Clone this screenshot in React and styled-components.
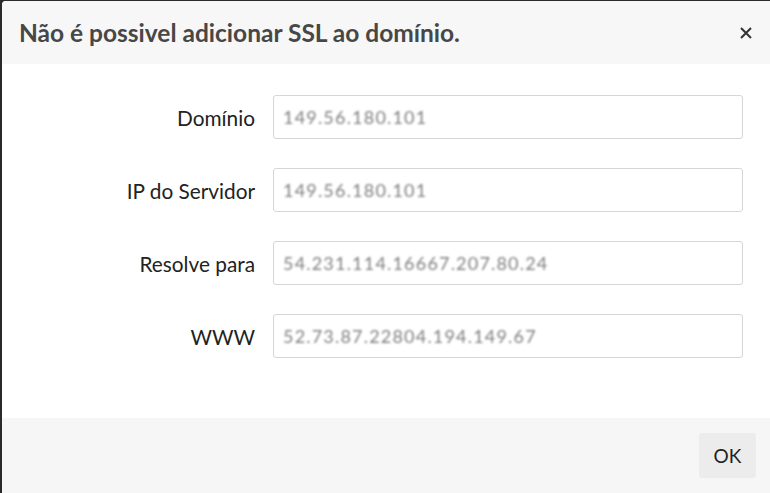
import React from "react";
import styled, { createGlobalStyle } from "styled-components";

const Global = createGlobalStyle`
  html, body { margin: 0; padding: 0; background: #2a2a2a; }
  body { font-family: Lato, "Open Sans", sans-serif; overflow: hidden; }
`;

const Dialog = styled.div`
  margin: 1px 0 0 2px;
  width: 768px;
  height: 492px;
  background: #fff;
  border-top-left-radius: 4px;
  display: flex;
  flex-direction: column;
  overflow: hidden;
`;

const Header = styled.div`
  height: 63px;
  flex: none;
  background: #f7f7f7;
  display: flex;
  align-items: center;
  justify-content: space-between;
  padding: 0 17px 0 17px;
  box-sizing: border-box;
`;

const Title = styled.h1`
  margin: 0;
  font-size: 24.5px;
  font-weight: 700;
  color: #474747;
  letter-spacing: 0;
`;

const Close = styled.button`
  border: 0;
  background: none;
  padding: 0;
  width: 14px;
  height: 14px;
  display: flex;
  align-items: center;
  justify-content: center;
  cursor: pointer;
`;

const Body = styled.div`
  flex: 1;
  padding: 31px 27px 0 0;
  display: flex;
  flex-direction: column;
  gap: 29px;
`;

const Row = styled.div`
  display: grid;
  grid-template-columns: 253px 1fr;
  column-gap: 18px;
  align-items: center;
`;

const Label = styled.label`
  text-align: right;
  font-size: 20.8px;
  color: #222;
`;

const Field = styled.div`
  height: 44px;
  box-sizing: border-box;
  border: 1px solid #d6d6d6;
  border-radius: 3px;
  display: flex;
  align-items: center;
  padding: 0 9px;
`;

const Value = styled.span`
  font-size: 18px;
  letter-spacing: 1.2px;
  color: #808080;
  filter: blur(1.1px);
`;

const Footer = styled.div`
  height: 75px;
  flex: none;
  background: #f6f6f6;
  display: flex;
  justify-content: flex-end;
  align-items: flex-start;
  padding: 15px 14px 0 0;
  box-sizing: border-box;
`;

const OkButton = styled.button`
  width: 57px;
  height: 45px;
  border: 0;
  border-radius: 3px;
  background: #ececec;
  font-family: inherit;
  font-size: 19px;
  color: #222;
  cursor: pointer;
`;

const rows = [
  ["Domínio", "149.56.180.101"],
  ["IP do Servidor", "149.56.180.101"],
  ["Resolve para", "54.231.114.16667.207.80.24"],
  ["WWW", "52.73.87.22804.194.149.67"],
];

export default function App() {
  return (
    <>
      <Global />
      <Dialog>
        <Header>
          <Title>Não é possivel adicionar SSL ao domínio.</Title>
          <Close aria-label="Fechar">
            <svg width="12" height="12" viewBox="0 0 12 12">
              <path d="M1 1L11 11M11 1L1 11" stroke="#333" strokeWidth="2" />
            </svg>
          </Close>
        </Header>
        <Body>
          {rows.map(([label, value]) => (
            <Row key={label}>
              <Label>{label}</Label>
              <Field>
                <Value>{value}</Value>
              </Field>
            </Row>
          ))}
        </Body>
        <Footer>
          <OkButton>OK</OkButton>
        </Footer>
      </Dialog>
    </>
  );
}
